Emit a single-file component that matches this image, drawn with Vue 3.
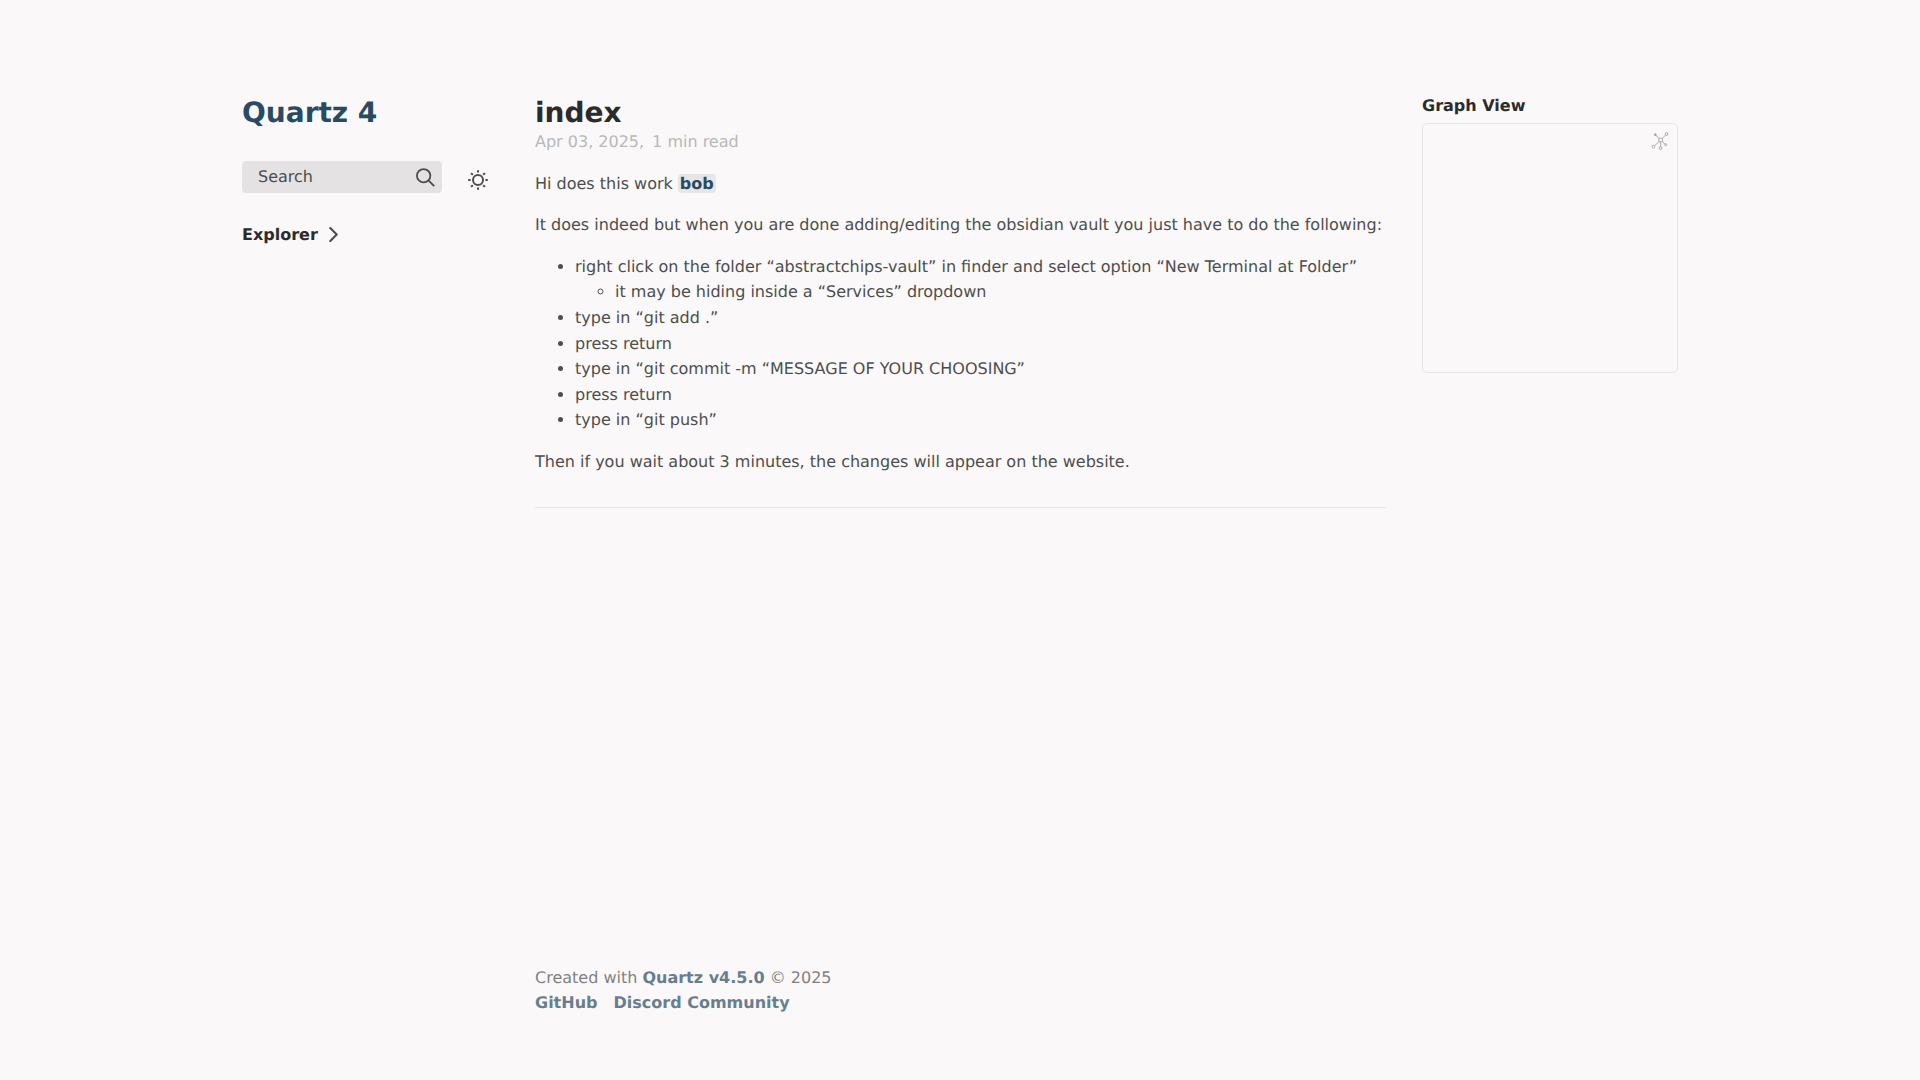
<script setup>
const items = [
  { t: 'right click on the folder “abstractchips-vault” in finder and select option “New Terminal at Folder”', sub: 'it may be hiding inside a “Services” dropdown' },
  { t: 'type in “git add .”' },
  { t: 'press return' },
  { t: 'type in “git commit -m “MESSAGE OF YOUR CHOOSING”' },
  { t: 'press return' },
  { t: 'type in “git push”' },
]
</script>

<template>
  <div class="page">
    <div class="body">
      <aside class="left">
        <h2 class="title">Quartz 4</h2>
        <div class="tools">
          <div class="search">
            <span>Search</span>
            <svg class="mag" viewBox="0 0 19.9 19.7" fill="none" stroke="#4e4e4e" stroke-width="1.9">
              <path d="M18.5 18.3l-5.4-5.4" stroke-linecap="square" />
              <circle cx="8" cy="8" r="7" />
            </svg>
          </div>
          <svg class="sun" viewBox="0 0 20 20" fill="none" stroke="#4e4e4e" stroke-width="2" stroke-linecap="butt">
            <circle cx="10" cy="10" r="5" />
            <path d="M10 0.2v2.4M10 17.4v2.4M0.2 10h2.4M17.4 10h2.4M3.1 3.1l1.7 1.7M15.2 15.2l1.7 1.7M3.1 16.9l1.7-1.7M15.2 4.8l1.7-1.7" />
          </svg>
        </div>
        <div class="explorer">
          <span>Explorer</span>
          <svg class="chev" viewBox="5 8 14 8" fill="none" stroke="#4e4e4e" stroke-width="2" stroke-linecap="round" stroke-linejoin="round">
            <polyline points="6 9 12 15 18 9" />
          </svg>
        </div>
      </aside>

      <main class="center">
        <h1>index</h1>
        <p class="meta">Apr 03, 2025,<span class="read">1 min read</span></p>
        <article>
          <p>Hi does this work <a class="tag">bob</a></p>
          <p>It does indeed but when you are done adding/editing the obsidian vault you just have to do the following:</p>
          <ul>
            <li v-for="(item, i) in items" :key="i">
              {{ item.t }}
              <ul v-if="item.sub"><li>{{ item.sub }}</li></ul>
            </li>
          </ul>
          <p>Then if you wait about 3 minutes, the changes will appear on the website.</p>
        </article>
        <hr />
        <footer>
          <p>Created with <a>Quartz v4.5.0</a> © 2025</p>
          <div class="links"><a>GitHub</a><a>Discord Community</a></div>
        </footer>
      </main>

      <aside class="right">
        <h3>Graph View</h3>
        <div class="graph">
          <svg class="expand" viewBox="0 0 18 18" fill="none" stroke="#a4a4a4" stroke-width="0.9">
            <path d="M7.9 6.2h3.6v3.6H7.9z" />
            <path d="M11.5 6.2L14.6 3M7.9 6.2L4.8 3.4M7.9 9.8L3.4 13.9M9.6 9.8v5M11.5 9.8l2.6 2.5" />
            <circle cx="15.6" cy="2" r="1.4" />
            <circle cx="2.4" cy="14.7" r="1.4" />
            <circle cx="9.5" cy="16.1" r="1.4" />
            <circle cx="4.3" cy="2.7" r="1" fill="#a4a4a4" />
            <circle cx="14.7" cy="12.7" r="1" />
          </svg>
        </div>
      </aside>
    </div>
  </div>
</template>

<style>
html, body { margin: 0; background: #faf8f8; }
</style>

<style scoped>
.page {
  min-height: 1080px;
  box-sizing: border-box;
  background: #faf8f8;
  font-family: "DejaVu Sans", sans-serif;
  color: #4e4e4e;
  font-size: 16px;
  line-height: 25.6px;
  text-rendering: geometricPrecision;
}
.body {
  display: grid;
  grid-template-columns: 293px 851px 320px;
  width: 1464px;
  margin-left: 242px;
}
.left { padding-top: 93px; }
.title {
  margin: 0;
  font-size: 28px;
  line-height: 40px;
  font-weight: 700;
  color: #284b63;
}
.tools { display: flex; align-items: flex-start; margin-top: 28px; }
.search {
  width: 200px;
  height: 32px;
  border-radius: 4px;
  background: rgba(43, 43, 43, 0.1);
  display: flex;
  align-items: center;
  justify-content: space-between;
  padding: 0 7px 0 16px;
  box-sizing: border-box;
  flex: none;
}
.mag { width: 19px; height: 19px; }
.sun { width: 20px; height: 20px; margin-left: 26px; margin-top: 9px; }
.explorer {
  display: flex;
  align-items: center;
  gap: 8px;
  margin-top: 29px;
  font-weight: 700;
  color: #2b2b2b;
}
.chev { width: 15px; height: 15px; transform: rotate(-90deg); }
.center { padding-top: 93px; min-height: 1016px; box-sizing: border-box; display: flex; flex-direction: column; }
h1 {
  margin: 0;
  font-size: 28px;
  line-height: 40px;
  font-weight: 700;
  color: #2b2b2b;
}
.meta { margin: -4px 0 0; color: #b8b8b8; }
.read { margin-left: 8px; }
article { margin-top: 16px; }
article p { margin: 0 0 16px; }
.tag {
  color: #284b63;
  font-weight: 700;
  background: rgba(40, 75, 99, 0.1);
  border-radius: 4px;
  padding: 0 2px;
}
ul { margin: 0; padding-left: 40px; }
article > ul { margin-bottom: 16px; }
hr { width: 100%; margin: 16px 0 0; border: 0; border-top: 1px solid #e5e5e5; }
footer { margin-top: auto; opacity: 0.7; }
footer p { margin: 0; }
footer a { color: #284b63; font-weight: 700; }
.links { display: flex; gap: 16px; }
.right { padding-top: 92px; padding-left: 36px; }
h3 { margin: 0; font-size: 16px; line-height: 28px; font-weight: 700; color: #2b2b2b; }
.graph {
  position: relative;
  width: 256px;
  height: 250px;
  margin-top: 3px;
  box-sizing: border-box;
  border: 1px solid #e5e5e5;
  border-radius: 5px;
}
.expand { position: absolute; top: 8px; right: 8px; width: 18px; height: 18px; }
</style>
